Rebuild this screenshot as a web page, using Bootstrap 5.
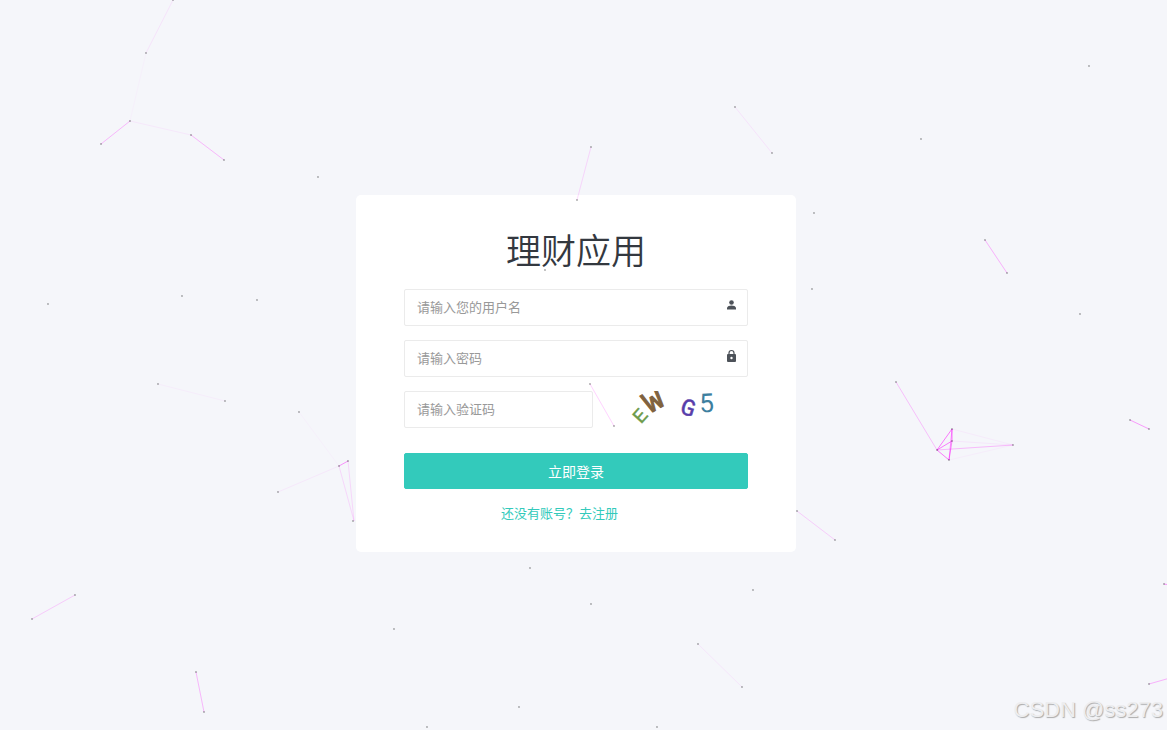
<!DOCTYPE html>
<html lang="zh-CN">
<head>
<meta charset="utf-8">
<meta name="viewport" content="width=device-width, initial-scale=1">
<title>理财应用</title>
<link href="https://cdn.jsdelivr.net/npm/bootstrap@5.3.0/dist/css/bootstrap.min.css" rel="stylesheet">
<style>
  body { background: #f5f6fa; color: #33383f; font-family: "Noto Sans CJK SC", sans-serif; font-size: 13px; }
  .login-page { padding: 24px 21px 8px 6px; }
  .login-box { max-width: 440px; padding: 30px 48px 29px; border-radius: 5px; }
  .login-title { font-size: 35px; line-height: 48px; font-weight: 350; color: #33383f; margin-bottom: 16px; }
  .login-form { gap: 14px; }
  .login-form .form-control { height: 37px; padding: 4px 12px 6px; font-size: 13px; line-height: 24px; border-color: #ebebeb; border-radius: 2px; }
  .login-form .form-control::placeholder { color: #999; line-height: 24px; }
  .captcha-field { flex: 0 0 55%; }
  .field-icon { top: 9px; right: 10px; }
  .btn-login { --bs-btn-bg: #33cabb; --bs-btn-border-color: #33cabb; --bs-btn-color: #fff; --bs-btn-hover-bg: #52d3c7; --bs-btn-hover-border-color: #52d3c7; --bs-btn-hover-color: #fff; --bs-btn-font-size: 14px; --bs-btn-line-height: 20px; --bs-btn-padding-y: 7px; --bs-btn-border-radius: 2px; margin-top: 11px; }
  .signup-line { line-height: 20px; padding-right: 33px; }
  .signup-line a { color: #33cabb; }
  .particles line { stroke: #f0f; stroke-width: 1; }
  .particles circle { fill: #555; }
  .watermark { right: 4px; bottom: 4px; font: 22px/32px "Liberation Sans", sans-serif; color: #ededef; text-shadow: 1px 1px 1px #aaa; }
</style>
</head>
<body class="vh-100 overflow-hidden position-relative">
<main class="login-page min-vh-100 d-flex align-items-center justify-content-center">
  <section class="login-box bg-white w-100">
    <h1 class="login-title text-center">理财应用</h1>
    <form class="login-form d-flex flex-column">
      <div class="position-relative">
        <input class="form-control" type="text" aria-label="用户名" placeholder="请输入您的用户名">
        <svg class="field-icon position-absolute" width="13" height="14" viewBox="0 0 13 14" fill="#4d5259" aria-hidden="true"><circle cx="6.500" cy="4.500" r="2.300"/><path d="M2 11.500V10c0-1.700 2.700-2.500 4.500-2.500S11 8.300 11 10v1.500z"/></svg>
      </div>
      <div class="position-relative">
        <input class="form-control" type="password" aria-label="密码" placeholder="请输入密码">
        <svg class="field-icon position-absolute" width="13" height="14" viewBox="0 0 13 14" aria-hidden="true"><path d="M4 6V4a2.500 2.500 0 0 1 5 0v2" fill="none" stroke="#4d5259" stroke-width="1.200"/><rect x="2" y="5" width="9" height="8" rx="1" fill="#4d5259"/><circle cx="6.500" cy="9" r="1.200" fill="#fff"/></svg>
      </div>
      <div class="d-flex">
        <div class="captcha-field">
          <input class="form-control" type="text" aria-label="验证码" placeholder="请输入验证码">
        </div>
        <svg class="ms-4" width="120" height="36" viewBox="0 0 120 36" font-family="'Liberation Mono', monospace" text-anchor="middle" role="img" aria-label="图形验证码">
          <text transform="translate(28 29) rotate(-48)" font-size="20" fill="#6c9a49" stroke="#6c9a49" stroke-width=".4">E</text>
          <text transform="translate(41 18) rotate(-30)" font-size="31" fill="#80623e" stroke="#80623e" stroke-width="1">W</text>
          <text transform="translate(69 24) rotate(17)" font-size="24" fill="#583daa" stroke="#583daa" stroke-width=".5">G</text>
          <text transform="translate(90 21) rotate(-3)" font-size="26" font-family="Roboto, sans-serif" fill="#3d809f">5</text>
        </svg>
      </div>
      <button class="btn btn-login w-100" type="submit">立即登录</button>
      <p class="signup-line text-center mb-0"><a class="text-decoration-none" href="#register">还没有账号？去注册</a></p>
    </form>
  </section>
</main>
<svg class="particles position-absolute top-0 start-0 w-100 h-100 pe-none" aria-hidden="true">
  <g>
    <line x1="173" y1="0" x2="146" y2="53" opacity=".07"/><line x1="146" y1="53" x2="130" y2="121" opacity=".02"/>
    <line x1="101" y1="144" x2="130" y2="121" opacity=".25"/><line x1="130" y1="121" x2="191" y2="135" opacity=".05"/>
    <line x1="191" y1="135" x2="224" y2="160" opacity=".25"/><line x1="735" y1="107" x2="772" y2="153" opacity=".07"/>
    <line x1="591" y1="147" x2="577" y2="200" opacity=".13"/><line x1="590" y1="384" x2="614" y2="426" opacity=".17"/>
    <line x1="985" y1="240" x2="1007" y2="273" opacity=".28"/><line x1="896" y1="382" x2="937" y2="450" opacity=".22"/>
    <line x1="937" y1="450" x2="952" y2="429" opacity=".5"/><line x1="937" y1="450" x2="952" y2="441" opacity=".5"/>
    <line x1="937" y1="450" x2="949" y2="460" opacity=".5"/><line x1="952" y1="429" x2="952" y2="441" opacity=".5"/>
    <line x1="952" y1="441" x2="949" y2="460" opacity=".45"/><line x1="952" y1="429" x2="949" y2="460" opacity=".4"/>
    <line x1="937" y1="450" x2="1013" y2="445" opacity=".24"/><line x1="952" y1="429" x2="1013" y2="445" opacity=".04"/>
    <line x1="952" y1="441" x2="1013" y2="445" opacity=".06"/><line x1="949" y1="460" x2="1013" y2="445" opacity=".03"/>
    <line x1="1130" y1="420" x2="1149" y2="429" opacity=".36"/><line x1="797" y1="511" x2="835" y2="540" opacity=".16"/>
    <line x1="158" y1="384" x2="225" y2="401" opacity=".03"/><line x1="299" y1="412" x2="339" y2="466" opacity=".02"/>
    <line x1="278" y1="492" x2="339" y2="466" opacity=".05"/><line x1="339" y1="466" x2="348" y2="461" opacity=".4"/>
    <line x1="339" y1="466" x2="354" y2="521" opacity=".12"/><line x1="348" y1="461" x2="354" y2="521" opacity=".12"/>
    <line x1="32" y1="619" x2="75" y2="595" opacity=".17"/><line x1="196" y1="672" x2="204" y2="712" opacity=".25"/>
    <line x1="698" y1="644" x2="742" y2="687" opacity=".06"/><line x1="1149" y1="684" x2="1170" y2="678" opacity=".28"/><line x1="1164" y1="584" x2="1170" y2="585" opacity=".4"/>
  </g>
  <g id="dots"></g>
</svg>
<div class="watermark position-absolute pe-none">CSDN @ss273</div>
<script src="https://cdn.jsdelivr.net/npm/bootstrap@5.3.0/dist/js/bootstrap.bundle.min.js"></script>
<script>
  const points = [[173,0],[146,53],[130,121],[101,144],[191,135],[224,160],[318,177],[48,304],[182,296],[257,300],[158,384],[225,401],[299,412],[278,492],[339,466],[348,461],[353,521],[75,595],[32,619],[196,672],[204,712],[394,629],[427,727],[519,707],[530,568],[591,604],[657,727],[698,644],[742,687],[753,590],[835,540],[797,511],[590,384],[614,426],[545,270],[577,200],[591,147],[735,107],[772,153],[921,139],[1089,66],[814,213],[812,289],[985,240],[1007,273],[1080,314],[896,382],[937,450],[952,429],[952,441],[949,460],[1013,445],[1130,420],[1149,429],[1164,584],[1149,684]];
  document.getElementById('dots').innerHTML = points.map(([x, y]) => `<circle cx="${x}" cy="${y}" r=".65"/>`).join('');
</script>
</body>
</html>
